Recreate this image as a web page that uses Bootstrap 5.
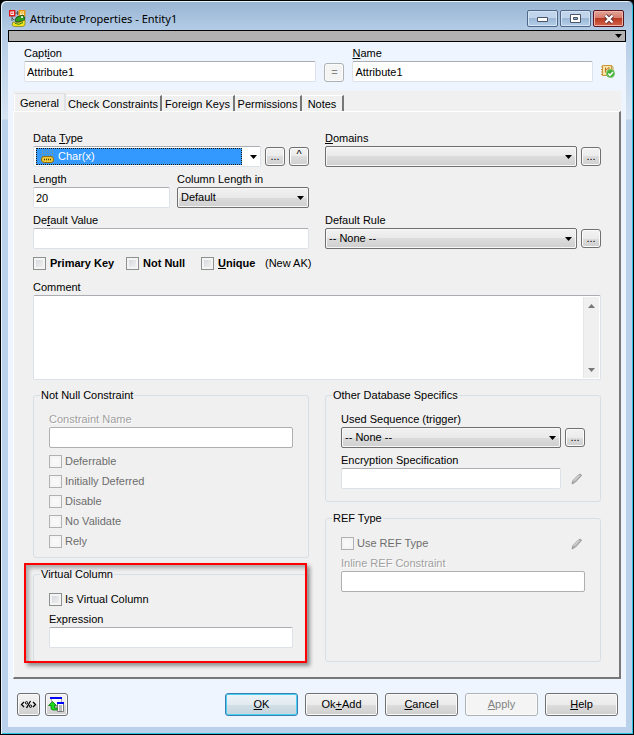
<!DOCTYPE html>
<html lang="en">
<head>
<meta charset="utf-8">
<meta name="viewport" content="width=device-width, initial-scale=1">
<title>Attribute Properties - Entity1</title>
<link href="https://cdn.jsdelivr.net/npm/bootstrap@5.3.0/dist/css/bootstrap.min.css" rel="stylesheet">
<style>
body{background:#000;font-family:"Liberation Sans",Arial,sans-serif;font-size:11px;line-height:13px;color:#000}
.dialog{min-height:100vh;border:1px solid #000;border-radius:6px 6px 0 0;
  background:linear-gradient(#98b4d2,#b4cce6 30px,#d6e4f3 118px,#b9d1ea 119px);
  box-shadow:inset 1px 1px #e8f4fc,inset -1px -1px #2fc0e6;padding:0 7px 7px}
.titlebar{height:29px;padding:9px 2px 0 1px}
.titlebar h1{font:11px/18px "Noto Sans","Open Sans",sans-serif;color:#000}
.winbtns{gap:2px}
.winbtn{width:31px;height:17px;border:1px solid #50668a;border-radius:2px;padding:0;display:flex;align-items:center;justify-content:center;
  background:linear-gradient(#c0d5eb 50%,#9bb7d5 50%,#b4d0ea);box-shadow:inset 0 0 0 1px #d5e4f3}
.winbtn.shut{border-color:#5a1420;background:linear-gradient(#e3a498 0,#d5796a 50%,#b93a22 50%,#d4634a);box-shadow:inset 0 0 0 1px #eeb5a8}
.strip{height:12px;background:#b2b2b2;border:1px solid #000;padding:0 3px}
.client{background:#eef5ff}
.head{padding:5px 11px 9px 16px;gap:8px}
.cap-field{flex:293 1 0}
.name-field{flex:241 1 0}
label,legend{font-size:11px;line-height:13px}
label{display:block}
u{text-underline-offset:1px}
.field>label{margin-bottom:1px}
.box,.form-control.box,.form-select.box{height:21px;min-height:21px;padding:0 2px;font-size:11px;line-height:13px;color:#000;border-radius:2px;
  border:1px solid #dde2ea;border-top-color:#abadb3;background-color:#fff}
.form-control.box:disabled{border-color:#afafaf;background:#fff}
.form-select.box{padding:0 18px 0 3px;border-color:#707070;
  background:url("data:image/svg+xml,%3Csvg xmlns='http://www.w3.org/2000/svg' width='7' height='4'%3E%3Cpath d='M0 0h7L3.500 4z'/%3E%3C/svg%3E") right 4px center/7px 4px no-repeat,linear-gradient(#f2f2f2,#e9e9e9 50%,#dcdcdc 50%,#cfcfcf);box-shadow:inset 0 0 0 1px #f7f7f7}
.gbtn{border:1px solid #707070;border-radius:3px;padding:0;font-size:11px;line-height:13px;color:#000;flex:none;display:flex;align-items:center;justify-content:center;
  background:linear-gradient(#f2f2f2,#ebebeb 50%,#dddddd 50%,#cfcfcf);box-shadow:inset 0 0 0 1px #fbfbfb}
.gbtn.sm{width:20px;height:19px}
.gbtn.md{width:23px;height:23px}
.gbtn.lg{width:73px;height:23px}
.gbtn.main{border-color:#3c7fb1;box-shadow:inset 0 0 0 1px #48d1f2;background:linear-gradient(#eef4f8,#e2ebf0 50%,#d2dfe6 50%,#c5d5de)}
.gbtn:disabled{color:#838383;border-color:#adb2b5;background:#f4f4f4}
.tabarea{margin:0 5px;background:#f0f0f0}
.tabs{height:20px;border:0;padding:1px 1px 0;align-items:flex-end;flex-wrap:nowrap}
.tabs .nav-link{height:17px;padding:0;border:0;border-radius:0;border-right:2px solid #777;border-top:1px solid #fff;color:#000;background:#f0f0f0;font-size:11px;line-height:16px;text-align:center;white-space:nowrap}
.tabs .nav-link.active{height:19px;background:#f0f0f0;color:#000;border-left:1px solid #fff}
.t-a{width:52px}.t-b{width:96px}.t-c{width:73px}.t-d{width:67px}.t-e{width:42px}
.pane{border:1px solid #fff;border-right:2px solid #777;border-bottom:2px solid #777;padding:20px 18px 15px 19px}
.pair{display:grid;grid-template-columns:1fr 1fr;column-gap:16px;row-gap:6px}
.lengths{display:grid;grid-template-columns:137fr 132fr;gap:7px}
.combo{padding:1px 3px 1px 2px}
.picked{background:#39f;border:1px dotted #2a1c00;height:17px;padding-left:4px}
.picked select{border:0;background:transparent;color:#fff;appearance:none;font-size:11px;line-height:13px;padding:0;outline:0}
.tick{gap:3px;height:13px}
.keys .tick{gap:4px}
.tick .form-check-input{width:13px;height:13px;margin:0;border-radius:0;border:1px solid #8e8f8f;flex:none;
  background:linear-gradient(135deg,#cfd2d8,#f6f6f6);box-shadow:inset 0 0 0 2px #f4f4f4}
.tick .form-check-input:disabled{border-color:#b1b1b1;background:#f8f8f8;opacity:1}
.tick .form-check-input:disabled~label{opacity:1;color:#6d6d6d}
.keys{display:grid;grid-template-columns:93px 75px 64px auto;margin:8px 0 11px}
.note.box{height:85px;border-color:#abadb3 #dde2ea #dde2ea;padding:1px}
.note textarea{border:0;resize:none;outline:0;overflow:hidden}
.track{width:16px;background:#f0f0f0;padding:7px 0 6px;border-left:1px solid #e6e6e6}
.lower{margin-top:9px}
.stack{gap:10px}
.frame{border:1px solid #d5dfe5;border-radius:3px;padding:0 6px}
.frame legend{float:none;width:auto;margin:0;padding:0 1px}
.frame .inner{padding:11px 9px 9px}
.frame .inner.late{padding-top:12px}
.frame .inner.roomy{padding-bottom:12px}
.ticks{gap:7px;margin-top:7px}
.enc{margin-top:6px}
.pen{width:20px;height:13px;padding-left:4px;flex:none;display:flex;justify-content:center;align-items:center}
.dim{color:#a0a0a0;text-shadow:1px 1px #fff}
.callout{position:absolute;inset:-5px 2px -1px -9px;border:2px solid #f00;box-shadow:3px 3px 4px rgba(0,0,0,.4),inset 3px 3px 4px rgba(0,0,0,.3);pointer-events:none}
.foot{padding:14px 8px 11px 9px}
.foot .tools{gap:5px}
.foot .acts{gap:7px}
</style>
<script src="https://cdn.jsdelivr.net/npm/bootstrap@5.3.0/dist/js/bootstrap.bundle.min.js"></script>
</head>
<body>
<main class="dialog d-flex flex-column">
  <header class="titlebar d-flex align-items-start">
    <svg width="17" height="18" viewBox="0 0 17 18" class="me-1" aria-hidden="true">
      <path d="M6 3h5M8.500 1v4" stroke="#555"/><path d="M.7.7h5v5h-5z" fill="#fff" stroke="#e01818" stroke-width="1.400"/><path d="M2 3.200h2.500" stroke="#e01818"/>
      <path d="M10.200.7h5.500v5h-5.500z" fill="#fff3b0" stroke="#e9960c" stroke-width="1.400"/><path d="M11.500 3h3" stroke="#e9960c"/>
      <path d="M3 6v5M3 8l2 2" stroke="#555" fill="none"/>
      <path d="M6 10q1-4 5-4l3-1 2 3-1 3-8 1z" fill="#2c9c22" stroke="#163f0d" stroke-width=".8"/>
      <path d="M4 12q6 2 12-2v5l-2 1.500H5L3 15z" fill="#f4e51b" stroke="#6d6808" stroke-width=".6"/><path d="M6 13.500q4 2 8-1" stroke="#2c7a16" fill="none"/><circle cx="13" cy="7" r="1" fill="#fff"/>
    </svg>
    <h1 class="mb-0 flex-fill">Attribute Properties - Entity1</h1>
    <div class="d-flex winbtns">
      <button class="winbtn" aria-label="Minimize"><svg width="11" height="9"><path d="M.5 3.500h10v4H.5z" fill="#fff" stroke="#4b5566"/></svg></button>
      <button class="winbtn" aria-label="Maximize"><svg width="11" height="9"><path d="M.5.5h10v8H.5z" fill="#fff" stroke="#4b5566"/><path d="M3.500 3.500h4v2h-4z" fill="#8ba8c8" stroke="#4b5566"/></svg></button>
      <button class="winbtn shut" aria-label="Close"><svg width="12" height="10"><path d="M2.500 1.500l7 7m0-7l-7 7" stroke="#5b3036" stroke-width="4"/><path d="M2.500 1.500l7 7m0-7l-7 7" stroke="#fff" stroke-width="2.400"/></svg></button>
    </div>
  </header>
  <div class="strip d-flex justify-content-end align-items-center"><svg width="7" height="4"><path d="M0 0h7L3.500 4z"/></svg></div>
  <div class="client flex-fill d-flex flex-column">
    <div class="head d-flex align-items-end">
      <div class="field cap-field"><label for="cap">Capt<u>i</u>on</label><input id="cap" class="form-control box" value="Attribute1"></div>
      <button class="gbtn sm" disabled aria-label="Copy caption to name">=</button>
      <div class="field name-field"><label for="nam"><u>N</u>ame</label><input id="nam" class="form-control box" value="Attribute1"></div>
      <svg width="14" height="18" viewBox="0 0 14 18" class="flex-shrink-0" aria-hidden="true"><path d="M1.500 1.500h9v10h-9z" fill="#fbe3a4" stroke="#c8963c"/><path d="M0 3h2M0 5.500h2M0 8h2M0 10.500h2M10 1.500l2 1.500v6" stroke="#c8963c" fill="none"/><path d="M4.500 3.500v5M5 6l3-2.500v3" stroke="#b6762c" fill="none"/><circle cx="9.500" cy="9.500" r="4" fill="#43ae35" stroke="#79c76c"/><path d="M7.300 9.500l1.700 1.800 3-3.300" fill="none" stroke="#fff" stroke-width="1.500"/></svg>
    </div>
    <div class="tabarea flex-fill d-flex flex-column">
      <nav class="nav nav-tabs tabs" role="tablist">
        <button class="nav-link active t-a" role="tab">General</button>
        <button class="nav-link t-b" role="tab">Check Constraints</button>
        <button class="nav-link t-c" role="tab">Foreign Keys</button>
        <button class="nav-link t-d" role="tab">Permissions</button>
        <button class="nav-link t-e" role="tab">Notes</button>
      </nav>
      <div class="pane flex-fill d-flex flex-column">
        <div class="pair">
          <div class="field"><label for="dtype">Data <u>T</u>ype</label>
            <div class="d-flex align-items-center">
              <div class="box combo d-flex align-items-center flex-fill me-1">
                <div class="picked d-flex align-items-center flex-fill me-2">
                  <svg width="13" height="14" class="me-1" aria-hidden="true"><path d="M1 1h11M1 3.500h11M1 6h11" stroke="#9c9a58" stroke-dasharray="1 1.500"/><rect x=".5" y="6.500" width="12" height="6" rx="2.500" fill="#edc93b" stroke="#8c6d12"/><path d="M3 9.500h1m1 0h1m1 0h1m1 0h1" stroke="#4b3900" stroke-width="1.500"/></svg>
                  <select id="dtype" class="flex-fill"><option>Char(x)</option></select>
                </div>
                <svg width="7" height="4"><path d="M0 0h7L3.500 4z"/></svg>
              </div>
              <button class="gbtn sm me-1" aria-label="Browse data types">...</button>
              <button class="gbtn sm pb-1" aria-label="Parent type">^</button>
            </div>
          </div>
          <div class="field"><label for="dom"><u>D</u>omains</label>
            <div class="d-flex align-items-center gap-1"><select id="dom" class="form-select box"><option></option></select><button class="gbtn sm" aria-label="Browse domains">...</button></div>
          </div>
          <div class="lengths">
            <div class="field"><label for="len">Length</label><input id="len" class="form-control box" value="20"></div>
            <div class="field"><label for="clen">Column Length in</label><select id="clen" class="form-select box"><option>Default</option></select></div>
          </div>
          <div></div>
          <div class="field"><label for="dval">De<u>f</u>ault Value</label><input id="dval" class="form-control box"></div>
          <div class="field"><label for="drule">Default Rule</label>
            <div class="d-flex align-items-center gap-1"><select id="drule" class="form-select box"><option>-- None --</option></select><button class="gbtn sm" aria-label="Browse rules">...</button></div>
          </div>
        </div>
        <div class="keys">
          <div class="tick d-flex"><input type="checkbox" class="form-check-input" id="pk"><label for="pk" class="fw-bold">Primary Key</label></div>
          <div class="tick d-flex"><input type="checkbox" class="form-check-input" id="nn"><label for="nn" class="fw-bold">Not Null</label></div>
          <div class="tick d-flex"><input type="checkbox" class="form-check-input" id="uq"><label for="uq" class="fw-bold"><u>U</u>nique</label></div>
          <span>(New AK)</span>
        </div>
        <div class="field"><label for="com">Comment</label>
          <div class="box note d-flex"><textarea id="com" class="flex-fill"></textarea>
            <div class="track d-flex flex-column justify-content-between align-items-center"><svg width="7" height="4"><path d="M0 4h7L3.500 0z" fill="#777"/></svg><svg width="7" height="4"><path d="M0 0h7L3.500 4z" fill="#777"/></svg></div>
          </div>
        </div>
        <div class="pair flex-fill lower">
          <div class="stack d-flex flex-column">
            <fieldset class="frame"><legend>Not Null Constraint</legend>
              <div class="inner">
                <div class="field"><label for="cname" class="dim">Constraint Name</label><input id="cname" class="form-control box" disabled></div>
                <div class="ticks d-flex flex-column">
                  <div class="tick d-flex"><input type="checkbox" class="form-check-input" id="k1" disabled><label for="k1">Deferrable</label></div>
                  <div class="tick d-flex"><input type="checkbox" class="form-check-input" id="k2" disabled><label for="k2">Initially Deferred</label></div>
                  <div class="tick d-flex"><input type="checkbox" class="form-check-input" id="k3" disabled><label for="k3">Disable</label></div>
                  <div class="tick d-flex"><input type="checkbox" class="form-check-input" id="k4" disabled><label for="k4">No Validate</label></div>
                  <div class="tick d-flex"><input type="checkbox" class="form-check-input" id="k5" disabled><label for="k5">Rely</label></div>
                </div>
              </div>
            </fieldset>
            <div class="position-relative flex-fill d-flex">
              <fieldset class="frame flex-fill"><legend>Virtual Column</legend>
                <div class="inner late">
                  <div class="tick d-flex"><input type="checkbox" class="form-check-input" id="vc"><label for="vc">Is Virtual Column</label></div>
                  <div class="field ticks"><label for="exp">Expression</label><input id="exp" class="form-control box"></div>
                </div>
              </fieldset>
              <div class="callout"></div>
            </div>
          </div>
          <div class="stack d-flex flex-column">
            <fieldset class="frame"><legend>Other Database Specifics</legend>
              <div class="inner roomy">
                <div class="field"><label for="seq">Used Sequence (trigger)</label>
                  <div class="d-flex align-items-center gap-1"><select id="seq" class="form-select box"><option>-- None --</option></select><button class="gbtn sm" aria-label="Browse sequences">...</button></div>
                </div>
                <div class="field enc"><label for="encr">Encryption Specification</label>
                  <div class="d-flex align-items-center gap-1"><input id="encr" class="form-control box"><span class="pen"><svg width="12" height="12"><path d="M1 11l1-3.500L8 1.500q2-1 2.500 1L4.500 9z" fill="#b8b8b8" stroke="#999"/><path d="M3 7.500l5-5" stroke="#e4e4e4"/></svg></span></div>
                </div>
              </div>
            </fieldset>
            <fieldset class="frame flex-fill"><legend>REF Type</legend>
              <div class="inner late">
                <div class="d-flex justify-content-between"><div class="tick d-flex"><input type="checkbox" class="form-check-input" id="ref" disabled><label for="ref">Use REF Type</label></div>
                  <span class="pen"><svg width="12" height="12"><path d="M1 11l1-3.500L8 1.500q2-1 2.500 1L4.500 9z" fill="#b8b8b8" stroke="#999"/><path d="M3 7.500l5-5" stroke="#e4e4e4"/></svg></span></div>
                <div class="field ticks"><label for="inl" class="dim">Inline REF Constraint</label><input id="inl" class="form-control box" disabled></div>
              </div>
            </fieldset>
          </div>
        </div>
      </div>
    </div>
    <footer class="foot d-flex justify-content-between">
      <div class="d-flex tools">
        <button class="gbtn md" aria-label="Script"><svg width="17" height="9" aria-hidden="true"><path d="M4 2L1.500 4.500 4 7M13 2l2.500 2.500L13 7M10.500 1l-4 7" fill="none" stroke="#000" stroke-width="1.300"/><circle cx="6.500" cy="2.800" r="1.200" fill="none" stroke="#000"/><circle cx="10.500" cy="6.200" r="1.200" fill="none" stroke="#000"/></svg></button>
        <button class="gbtn md" aria-label="Update model"><svg width="17" height="17" aria-hidden="true"><path d="M3.500 2.500h10v8h-10z" fill="#fff" stroke="#aaa"/><path d="M2 1h12v2H2z" fill="#00f"/><path d="M9.500 7.500h6v8h-6z" fill="#fff" stroke="#777"/><path d="M9 6h7v2H9z" fill="#00f"/><path d="M11 10h3m-3 2h3m-3 2h3" stroke="#777"/><path d="M.500 9.500l4-4 4 4H6.500v2.500H9v2H5q-2 0-2-2V9.500z" fill="#20d820" stroke="#087a08" stroke-width=".8"/></svg></button>
      </div>
      <div class="d-flex acts">
        <button class="gbtn lg main"><span><u>O</u>K</span></button>
        <button class="gbtn lg"><span>Ok<u>+</u>Add</span></button>
        <button class="gbtn lg"><span><u>C</u>ancel</span></button>
        <button class="gbtn lg" disabled><span><u>A</u>pply</span></button>
        <button class="gbtn lg"><span><u>H</u>elp</span></button>
      </div>
    </footer>
  </div>
</main>
</body>
</html>
